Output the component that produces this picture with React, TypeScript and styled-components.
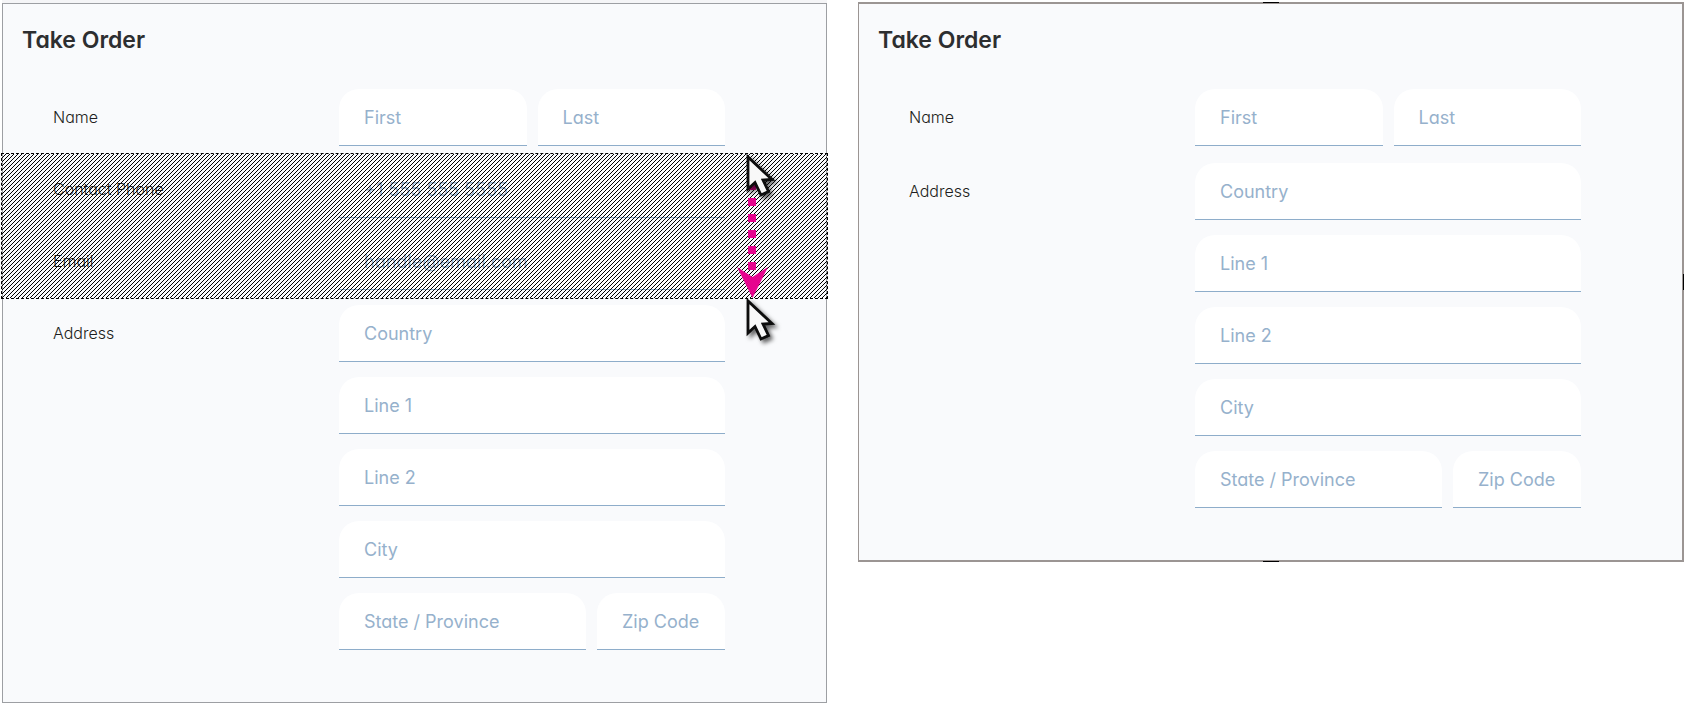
import React from "react";
import styled, { createGlobalStyle, css } from "styled-components";

const Global = createGlobalStyle`
  * { box-sizing: border-box; }
  body { margin: 0; background: #ffffff; }
`;

const Page = styled.main`
  display: grid;
  grid-template-columns: 825fr 826fr;
  column-gap: 31px;
  align-items: start;
  padding-left: 2px;
  font-family: Inter, "Liberation Sans", sans-serif;
  font-feature-settings: "cv11";
`;

const Panel = styled.form<{ $selected?: boolean; $gap: number }>`
  --group-gap: ${(p) => p.$gap}px;
  position: relative;
  margin-top: 3px;
  padding: 20px 101px 52px 19px;
  border: 1px solid #9d9fa3;
  background: #f9fafc;
  box-shadow: 0 -3px 0 #f5f5f7;
  ${(p) =>
    p.$selected &&
    css`
      margin-top: 2px;
      border-color: #9b9593;
      border-width: 2px 2px 2px 1px;
      box-shadow: none;
    `}
`;

const Title = styled.h1`
  margin: 0;
  font-size: 23px;
  line-height: 32px;
  font-weight: 600;
  color: #2d2e30;
`;

const Groups = styled.div`
  display: flex;
  flex-direction: column;
  gap: var(--group-gap);
  margin-top: 33px;
  padding-left: 31px;
`;

const Group = styled.div`
  display: grid;
  grid-template-columns: 286px 1fr;
  align-items: start;
`;

const GroupLabel = styled.label`
  font-size: 16px;
  line-height: 56px;
  font-weight: 300;
  color: #1d1e20;
`;

const Fields = styled.div`
  display: flex;
  flex-direction: column;
  gap: 15px;
`;

const FieldRow = styled.div<{ $columns?: string }>`
  display: grid;
  grid-template-columns: ${(p) => p.$columns ?? "1fr"};
  gap: 11px;
`;

const Field = styled.input`
  width: 100%;
  min-width: 0;
  height: 57px;
  padding: 0 25px;
  border: 0;
  border-bottom: 1px solid #8eadca;
  border-radius: 20px 20px 0 0;
  background: #ffffff;
  font: inherit;
  font-feature-settings: inherit;
  font-size: 18px;
  color: #2d2e30;
  &::placeholder { color: #96b1cc; opacity: 1; }
`;

const Selection = styled.div`
  position: relative;
  display: flex;
  flex-direction: column;
  gap: var(--group-gap);
`;

const Hatch = styled.svg`
  position: absolute;
  left: -52px;
  top: -8px;
  width: calc(100% + 155px);
  height: calc(100% + 17px);
  border: 1px dashed #000;
`;

const Gesture = styled.svg`
  position: absolute;
  right: -60px;
  top: -7px;
  width: 50px;
  height: 200px;
`;

const Handle = styled.i<{ $side: "top" | "right" | "bottom" }>`
  position: absolute;
  background: #000;
  ${(p) =>
    p.$side === "right"
      ? css`right: -2px; top: calc(50% - 8px); width: 1px; height: 16px;`
      : css`left: calc(50% - 8px); ${p.$side}: -2px; width: 16px; height: 1px;`}
`;

type FieldSpec = { id: string; hint: string; type?: string };
type GroupSpec = { label: string; rows: { columns?: string; fields: FieldSpec[] }[] };

const nameGroup: GroupSpec = {
  label: "Name",
  rows: [{ columns: "1fr 1fr", fields: [{ id: "first", hint: "First" }, { id: "last", hint: "Last" }] }],
};
const contactGroups: GroupSpec[] = [
  { label: "Contact Phone", rows: [{ fields: [{ id: "phone", hint: "+1 555 555 5555", type: "tel" }] }] },
  { label: "Email", rows: [{ fields: [{ id: "email", hint: "handle@email.com", type: "email" }] }] },
];
const addressGroup: GroupSpec = {
  label: "Address",
  rows: [
    { fields: [{ id: "country", hint: "Country" }] },
    { fields: [{ id: "line1", hint: "Line 1" }] },
    { fields: [{ id: "line2", hint: "Line 2" }] },
    { fields: [{ id: "city", hint: "City" }] },
    { columns: "1fr 128px", fields: [{ id: "state", hint: "State / Province" }, { id: "zip", hint: "Zip Code" }] },
  ],
};

function FormGroup({ group, scope }: { group: GroupSpec; scope: string }) {
  return (
    <Group>
      <GroupLabel htmlFor={`${scope}-${group.rows[0].fields[0].id}`}>{group.label}</GroupLabel>
      <Fields>
        {group.rows.map((row, i) => (
          <FieldRow key={i} $columns={row.columns}>
            {row.fields.map((f) => (
              <Field key={f.id} id={`${scope}-${f.id}`} type={f.type ?? "text"} placeholder={f.hint} aria-label={f.hint} />
            ))}
          </FieldRow>
        ))}
      </Fields>
    </Group>
  );
}

function Pointer({ y }: { y: number }) {
  return (
    <path
      transform={`translate(11 ${y})`}
      d="M2 3 V35 L9 28.5 L15 41 L22.5 37.5 L17 26 L26 25.5 Z"
      fill="#f8f8f8"
      stroke="#0a0a0a"
      strokeWidth="2.8"
      filter="url(#pointer-shadow)"
    />
  );
}

function DragOverlay() {
  return (
    <>
      <Hatch aria-hidden="true">
        <defs>
          <pattern id="hatch" width="4" height="4" patternUnits="userSpaceOnUse" shapeRendering="crispEdges">
            <path d="M3 0h1v1h-1z M2 1h1v1h-1z M1 2h1v1h-1z M0 3h1v1h-1z" fill="#000" />
          </pattern>
        </defs>
        <rect width="100%" height="100%" fill="url(#hatch)" />
      </Hatch>
      <Gesture aria-hidden="true">
        <defs>
          <filter id="pointer-shadow" x="-20%" y="-20%" width="160%" height="160%">
            <feDropShadow dx="3" dy="3" stdDeviation="2" floodColor="#000" floodOpacity="0.6" />
          </filter>
        </defs>
        <path d="M17 28 V122" stroke="#e6058f" strokeWidth="8" strokeDasharray="8 8" />
        <path d="M2 113 L17.5 123 L33 113 L17.5 144 Z" fill="#e6058f" />
        <Pointer y={0} />
        <Pointer y={144} />
      </Gesture>
    </>
  );
}

export default function App() {
  return (
    <>
      <Global />
      <Page>
        <Panel $gap={15}>
          <Title>Take Order</Title>
          <Groups>
            <FormGroup group={nameGroup} scope="before" />
            <Selection>
              {contactGroups.map((g) => (
                <FormGroup key={g.label} group={g} scope="before" />
              ))}
              <DragOverlay />
            </Selection>
            <FormGroup group={addressGroup} scope="before" />
          </Groups>
        </Panel>
        <Panel $selected $gap={17}>
          <Title>Take Order</Title>
          <Groups>
            <FormGroup group={nameGroup} scope="after" />
            <FormGroup group={addressGroup} scope="after" />
          </Groups>
          <Handle $side="top" />
          <Handle $side="right" />
          <Handle $side="bottom" />
        </Panel>
      </Page>
    </>
  );
}
